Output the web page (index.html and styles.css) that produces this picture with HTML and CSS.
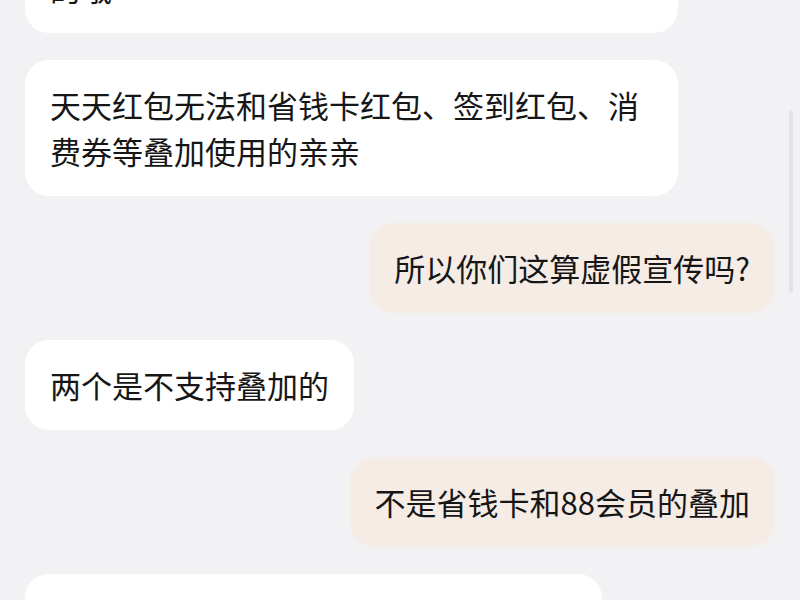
FILE: index.html
```html
<!DOCTYPE html>
<html lang="zh-CN">
<head>
<meta charset="utf-8">
<title>聊天</title>
<link rel="stylesheet" href="styles.css">
</head>
<body>
<div class="chat">
  <div class="msg msg-them">亲亲，天天红包的使用规则以页面展示为准的哦</div>
  <div class="msg msg-them">天天红包无法和省钱卡红包、签到红包、消费券等叠加使用的亲亲</div>
  <div class="msg msg-me">所以你们这算虚假宣传吗?</div>
  <div class="msg msg-them">两个是不支持叠加的</div>
  <div class="msg msg-me">不是省钱卡和88会员的叠加</div>
  <div class="msg msg-them">亲亲，省钱卡和会员是可以叠加使用的</div>
</div>
<div class="scrollbar"></div>
</body>
</html>
```
FILE: styles.css
```css
html, body {
  margin: 0;
  height: 100%;
  overflow: hidden;
}

body {
  background: #f2f2f4;
  font-family: "Noto Sans CJK SC", "Noto Sans", sans-serif;
  color: #161616;
  position: relative;
}

.chat {
  display: flex;
  flex-direction: column;
  align-items: flex-start;
  gap: 27px;
  padding: 0 25px;
  margin-top: -103px;
}

.msg {
  box-sizing: border-box;
  max-width: 653px;
  padding: 22px 25px;
  font-size: 31px;
  line-height: 46px;
  border-radius: 24px;
}

.msg-them {
  background: #ffffff;
}

.msg-me {
  align-self: flex-end;
  background: #f5ece6;
}

.scrollbar {
  position: absolute;
  left: 789px;
  top: 110px;
  width: 4px;
  height: 183px;
  border-radius: 2px;
  background: #e4e4e8;
}
```
